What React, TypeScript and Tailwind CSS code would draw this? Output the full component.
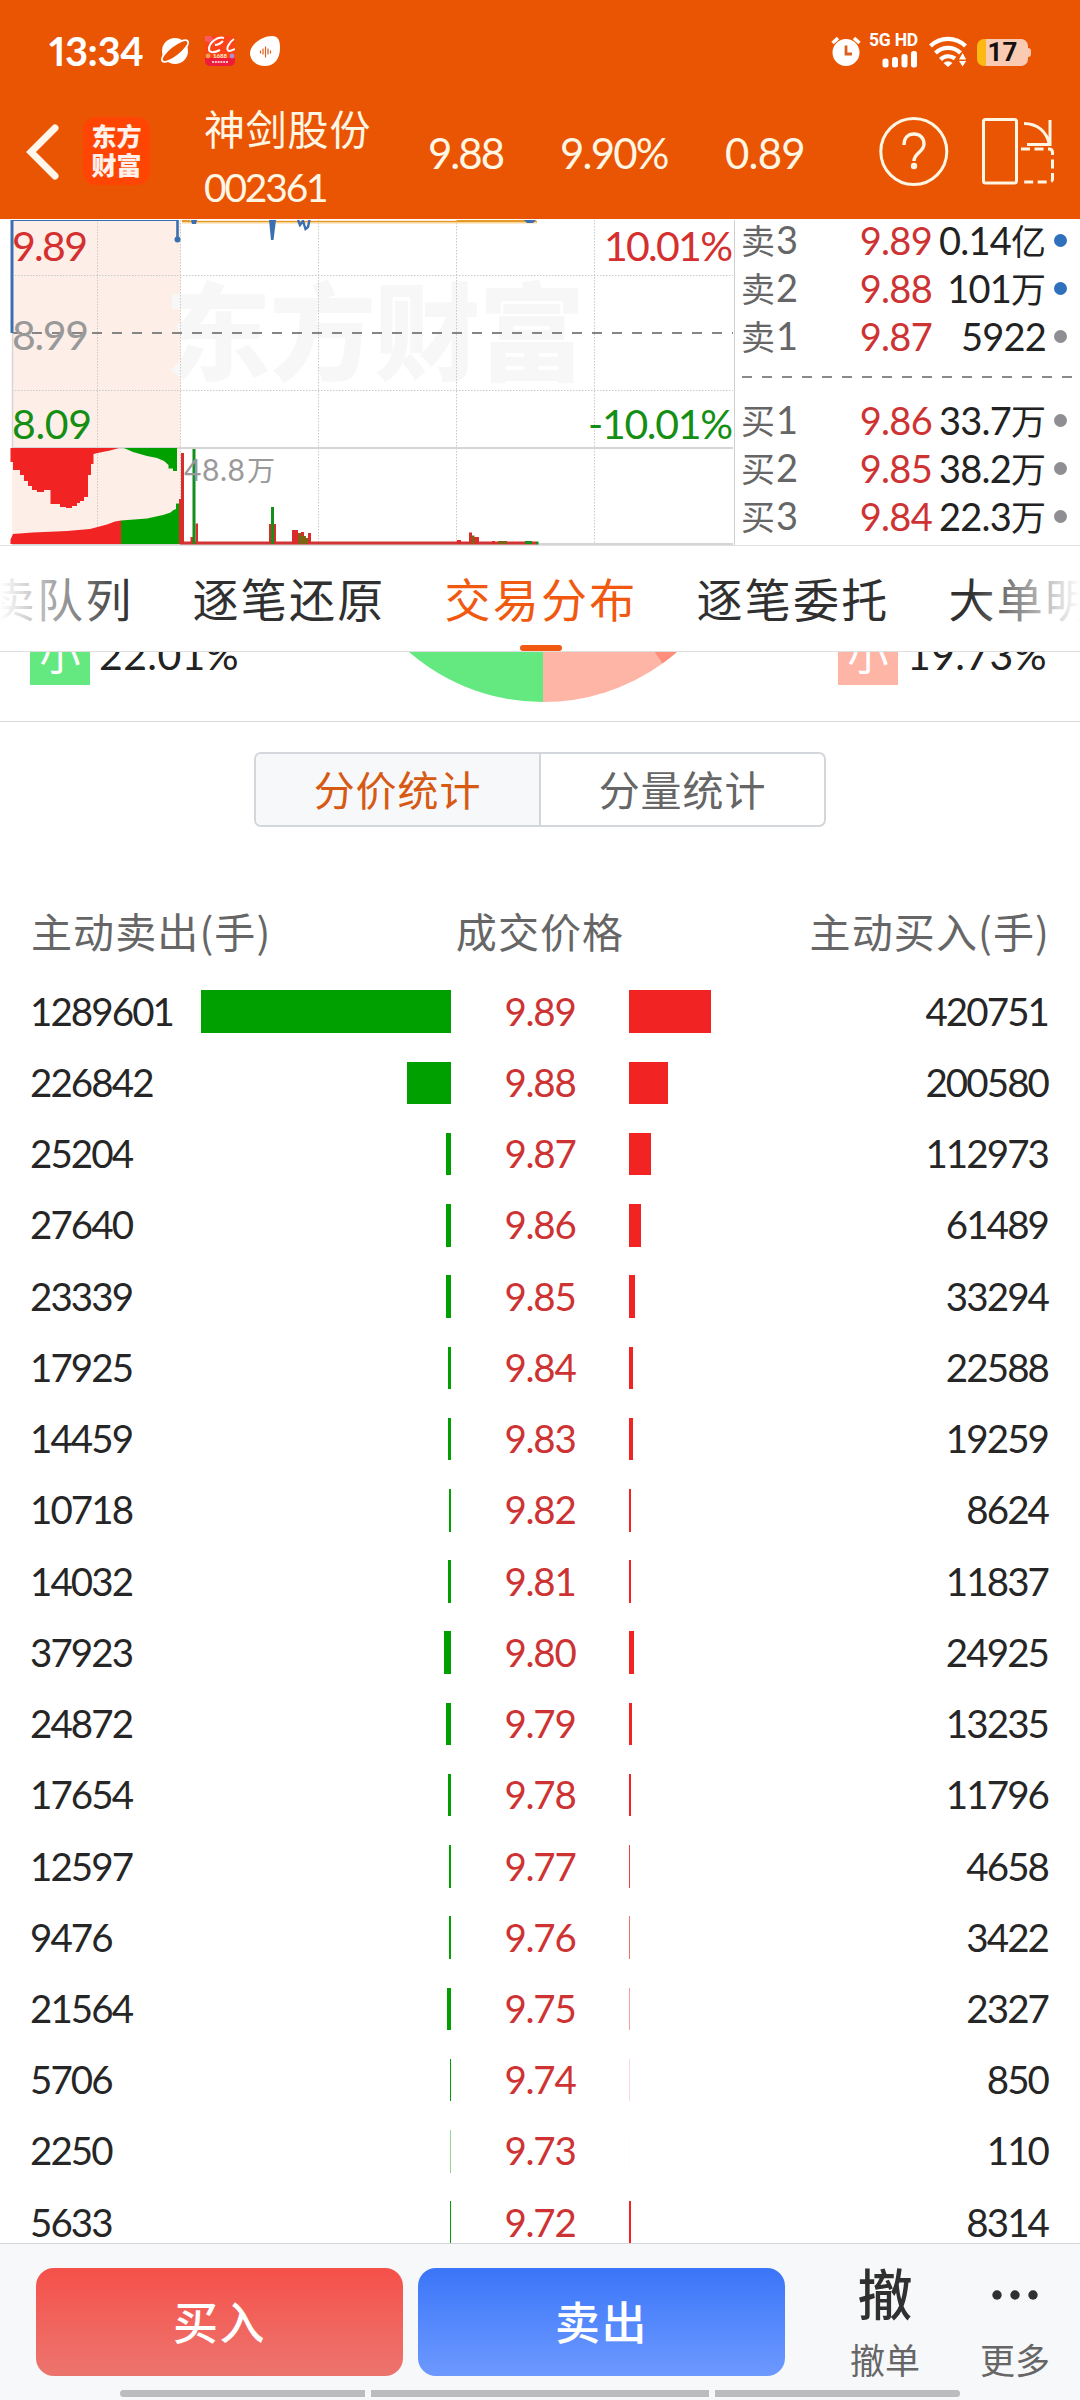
import { ReactNode } from 'react'

const rows = [
  { price: '9.89', sell: 1289601, buy: 420751 },
  { price: '9.88', sell: 226842, buy: 200580 },
  { price: '9.87', sell: 25204, buy: 112973 },
  { price: '9.86', sell: 27640, buy: 61489 },
  { price: '9.85', sell: 23339, buy: 33294 },
  { price: '9.84', sell: 17925, buy: 22588 },
  { price: '9.83', sell: 14459, buy: 19259 },
  { price: '9.82', sell: 10718, buy: 8624 },
  { price: '9.81', sell: 14032, buy: 11837 },
  { price: '9.80', sell: 37923, buy: 24925 },
  { price: '9.79', sell: 24872, buy: 13235 },
  { price: '9.78', sell: 17654, buy: 11796 },
  { price: '9.77', sell: 12597, buy: 4658 },
  { price: '9.76', sell: 9476, buy: 3422 },
  { price: '9.75', sell: 21564, buy: 2327 },
  { price: '9.74', sell: 5706, buy: 850 },
  { price: '9.73', sell: 2250, buy: 110 },
  { price: '9.72', sell: 5633, buy: 8314 },
]

const maxVolume = 1289601

// bars thinner than a pixel fade out instead of disappearing
function barStyle(v: number) {
  const w = (v / maxVolume) * 250
  return { width: `${Math.max(1, w)}px`, opacity: Math.min(1, w) }
}

const asks = [
  { side: '卖', level: '3', price: '9.89', volume: '0.14', unit: '亿', big: true },
  { side: '卖', level: '2', price: '9.88', volume: '101', unit: '万', big: true },
  { side: '卖', level: '1', price: '9.87', volume: '5922', unit: '', big: false },
]

const bids = [
  { side: '买', level: '1', price: '9.86', volume: '33.7', unit: '万', big: false },
  { side: '买', level: '2', price: '9.85', volume: '38.2', unit: '万', big: false },
  { side: '买', level: '3', price: '9.84', volume: '22.3', unit: '万', big: false },
]

const tabs = ['买卖队列', '逐笔还原', '交易分布', '逐笔委托', '大单明细']

function StatusBar() {
  return (
    <div className="flex h-[102px] items-start pl-[49px] text-white">
      <span className="mt-[27px] w-[111px] text-[40px] font-bold leading-[48px] tracking-[-0.5px] proportional-nums">13:34</span>
      <svg className="mt-[36px]" width="30" height="30" viewBox="0 0 30 30">
        <circle cx="15" cy="15" r="13" fill="#fff" />
        <ellipse cx="15" cy="15" rx="17" ry="6.6" transform="rotate(-38 15 15)" fill="#fff" />
        <ellipse cx="15" cy="15" rx="15.2" ry="4.3" transform="rotate(-38 15 15)" fill="#EA5504" />
      </svg>
      <svg className="ml-[15px] mt-[36px]" width="30" height="30" viewBox="0 0 30 30">
        <rect width="30" height="30" rx="5" fill="#FA4316" />
        <path d="M0 5V0h6l5 8z" fill="#FB5A63" />
        <path d="M0 22h30v3a5 5 0 0 1-5 5H5a5 5 0 0 1-5-5z" fill="#EE1B3A" />
        <path d="M19 2C12 0 4 7 4 13c0 4 5 4 11 1M10 9c4 0 6-2 8-4M29 3c-5 3-9 11-5 12 2 0 4-1 6-2" fill="none" stroke="#fff" strokeWidth="2" />
        <circle cx="3" cy="20" r="2.4" fill="#F0A04B" />
        <circle cx="27" cy="20" r="2.4" fill="#B58BD0" />
        <text x="15" y="22" fontSize="6" fontWeight="900" textAnchor="middle" fill="#FFE9C0">1688</text>
        <path d="M7 26h16" stroke="#FFC1C8" strokeWidth="2" strokeDasharray="2 .8" />
      </svg>
      <svg className="ml-[15px] mt-[36px]" width="30" height="30" viewBox="0 0 30 30">
        <path d="M22 0c6 0 8 4 8 12 0 11-6 18-15 18S0 24 0 17C0 8 13 0 22 0z" fill="#fff" />
        <path d="M10.500 14.500v3M13 12.500v6M15.500 10.500v11M18 12.500v6M20.500 14.500v3" stroke="#D9601F" strokeWidth="1.200" />
      </svg>

      <svg className="ml-[551px] mt-[36px]" width="30" height="30" viewBox="0 0 30 30">
        <circle cx="15" cy="16.500" r="13.500" fill="#fff" />
        <path d="M1.500 7l5.500-5M28.500 7L23 2" stroke="#fff" strokeWidth="3.500" />
        <path d="M15 9.500v8.500h6" fill="none" stroke="#D9601F" strokeWidth="2.800" />
      </svg>
      <div className="ml-[8px] mt-[32px] flex w-[49px] flex-col items-end">
        <span className="whitespace-nowrap font-['Roboto'] text-[17.500px] font-bold leading-[17px] tracking-[-0.2px]">5G HD</span>
        <svg className="mt-[2px]" width="36" height="17" viewBox="0 0 36 17">
          <rect x="0.500" y="7.500" width="6" height="9" rx="2.500" fill="#fff" />
          <rect x="10" y="6" width="6" height="10.500" rx="2.500" fill="#fff" />
          <rect x="19.500" y="3" width="6" height="13.500" rx="2.500" fill="#fff" />
          <rect x="29" y="0" width="6" height="16.500" rx="2.500" fill="#fff" />
        </svg>
      </div>
      <svg className="ml-[11px] mt-[36px]" width="38" height="31" viewBox="0 0 38 31">
        <g fill="none" stroke="#fff" strokeWidth="4.200">
          <path d="M1.500 10a25 25 0 0 1 35 0" />
          <path d="M6.500 17a18 18 0 0 1 25 0" />
          <path d="M11.500 23.500a11 11 0 0 1 14.500-1" />
        </g>
        <path d="M14.500 27q4.500-3.500 9 0L19 31z" fill="#fff" />
        <path d="M30 23.500l3.600-6.500 3.600 6.500zM30 25h7.200l-3.600 5.500z" fill="#fff" />
      </svg>
      <div className="ml-[10px] mt-[39px] flex items-center">
        <div className="flex h-[27px] w-[51px] items-center justify-center rounded-[7px] bg-[linear-gradient(90deg,#FCB813_9px,#F9CBB3_9px)] font-['Roboto'] text-[26px] font-bold leading-[27px] text-[#17110E]">
          17
        </div>
        <div className="h-[9px] w-[3px] rounded-r-[3px] bg-[#F9CBB3]" />
      </div>
    </div>
  )
}

function Header() {
  return (
    <header className="h-[219px] bg-[#EA5504] text-[#FFF6E4]">
      <StatusBar />
      <div className="flex h-[117px] items-start">
        <svg className="ml-[25px] mt-[20px]" width="36" height="60" viewBox="0 0 36 60" fill="none">
          <path d="M30 6L6 30l24 24" stroke="#FFF6EC" strokeWidth="7" strokeLinecap="round" strokeLinejoin="miter" />
        </svg>
        <div className="ml-[22px] mt-[15px] flex h-[68px] w-[67px] flex-col items-center justify-center rounded-[13px] bg-[#FF4503] text-[25px] font-black leading-[29px] text-[#FFF1EC]">
          <span>东方</span>
          <span>财富</span>
        </div>
        <div className="ml-[54px] flex w-[224px] flex-col">
          <span className="mt-[1px] text-[41px] leading-[54px] tracking-[0.8px]">神剑股份</span>
          <span className="mt-[7px] text-[39px] leading-[46px] tracking-[-2.200px]">002361</span>
        </div>
        <span className="mt-[26px] w-[132px] text-[42px] leading-[50px] tracking-[-2px]">9.88</span>
        <span className="mt-[26px] w-[165px] text-[42px] leading-[50px] tracking-[-1.800px]">9.90%</span>
        <span className="mt-[26px] w-[154px] text-[42px] leading-[50px] tracking-[-0.8px]">0.89</span>
        <svg className="mt-[15px] shrink-0" width="70" height="70" viewBox="0 0 70 70" fill="none" stroke="#FFF6E4" strokeWidth="3">
          <circle cx="34.800" cy="34.500" r="33" />
          <path d="M25 28c0-7 4-11 10-11s10 4 10 10c0 8-10 9-10 17" strokeWidth="3.400" />
          <circle cx="35" cy="49" r="3.200" fill="#FFF6E4" stroke="none" />
        </svg>
        <svg className="ml-[33px] mt-[15px] shrink-0" width="74" height="70" viewBox="0 0 74 70" fill="none" stroke="#FFF6E4" strokeWidth="3">
          <rect x="1.500" y="2.500" width="33" height="63.500" rx="2" />
          <path d="M42 6.500c14 0 23 9 25 20M68 3v24.500H45" />
          <path d="M39 32h28q3.500 0 3.500 3.500V62q0 3-3.500 3H39" strokeDasharray="9 4.500" />
        </svg>
      </div>
    </header>
  )
}

function MinuteChart() {
  return (
    <svg width="736" height="326" viewBox="0 220 736 326" className="shrink-0">
      <rect x="12" y="220" width="168.500" height="324" fill="#FDEEE7" />
      <text x="165" y="372" fontSize="106" fontWeight="900" fill="#F7F7F7" textLength="420">东方财富</text>
      <g stroke="#C9C9C9" strokeWidth="1" strokeDasharray="1.500 1.500">
        <path d="M12 275.500H733M12 390.500H733" />
        <path d="M97.500 220V544M180.500 220V544M318.500 220V544M456.500 220V544M594.500 220V544" />
      </g>
      <path d="M12 333H733" stroke="#858585" strokeWidth="2" strokeDasharray="10 10" />
      <path d="M12.500 333V448" stroke="#D5D5D5" strokeWidth="1.500" />
      <path d="M12 448H733M12 544H733" stroke="#D5D5D5" strokeWidth="2" />
      <path d="M734.500 220V545" stroke="#CFCFCF" />

      {/* price & average lines */}
      <path d="M182 222H537" stroke="#F8D698" strokeWidth="3" />
      <path d="M182 221.500H537" stroke="#E79A2C" strokeWidth="1" />
      <path d="M182 220.500H190M457 220.500H530" stroke="#E79A2C" strokeWidth="1" />
      <path d="M12 333V220" stroke="#3A70B2" strokeWidth="3" />
      <path d="M12 220.500H178" stroke="#3A70B2" strokeWidth="1.200" />
      <path d="M177.500 220V239" stroke="#3A70B2" strokeWidth="2.600" />
      <circle cx="177.500" cy="239.500" r="3" fill="#3A70B2" />
      <path d="M191 220h6l-1 4h-4zM269 220h7l-2.500 20h-2.500zM524 220h12l-3 3h-6z" fill="#3A70B2" />
      <path d="M298 220l2 5 3-4 2.500 8 2.500-2 1.500-7" fill="none" stroke="#3A70B2" strokeWidth="2.400" />

      {/* call auction */}
      <path
        d="M10.500 448V462H13V470H20V475H24V481H28V486H32V490H37V492H44V490H50.500V504H60V507H66V508H72V506H77V503H80V501H84V497H88V475H91V464H93.500V454L100 452.500L110 450.500L119 448Z"
        fill="#F22323"
      />
      <path d="M124 448L133 452L147 456L157 458L164 461L168.500 465V468.500H173V471H177V448Z" fill="#00A000" />
      <path d="M10.500 544V539.500L13 534L33 532.500L67 531L90 529L107 524.500L115 521.500L121 520.500V544Z" fill="#F22323" />
      <path d="M121 520.500L147 518.500L163 515L170.500 512.500L173.500 510L176 509V503.500H179V544H121Z" fill="#00A000" />

      {/* volume */}
      <path d="M180 543H536" stroke="#D23434" strokeWidth="3" />
      <path d="M179 499h2v-46h3V544h-5zM190.500 537h2.500v7h-2.500zM195.500 523.500h2.500V544h-2.500zM269 524h7V544h-7zM292 530h6V544h-6zM308 533h3V544h-3zM301 532h3v4h2v8h-5zM469 532.500h3V544h-3zM474 537h5v7h-5zM457 540h4v4h-4zM492 541h3v3h-3z" fill="#DB2B2B" />
      <path d="M192.500 449h3V544h-3zM271 507h3V544h-3zM525 541h7v3h-7zM536 541.500h2.500v3H536z" fill="#12901A" />
      <path d="M298 533h3V544h-3zM301 536h5V544h-5zM304 538h4V544h-4zM471.500 535.500h3V544h-3zM498 541h9v3h-9z" fill="#7C6414" />

      <g fontSize="41">
        <text x="12" y="261" fill="#D43030" textLength="76">9.89</text>
        <text x="12" y="350" fill="#999" textLength="77">8.99</text>
        <text x="12" y="439" fill="#148F14" textLength="80">8.09</text>
        <text x="604" y="261" fill="#D43030" textLength="129">10.01%</text>
        <text x="588" y="439" fill="#148F14" textLength="145">-10.01%</text>
        <text x="184" y="481" fill="#999" fontSize="30">
          <tspan textLength="61">48.8</tspan>
          <tspan x="247" fontSize="28">万</tspan>
        </text>
      </g>
    </svg>
  )
}

function DepthRow({ item }: { item: (typeof asks)[number] }) {
  return (
    <div className="flex h-12 items-center text-[38px] leading-[48px] tracking-[-0.8px]">
      <span className="flex w-[91px] items-baseline text-[#666]">
        <span className="text-[34px] tracking-normal">{item.side}</span>
        <span className="ml-[1px]">{item.level}</span>
      </span>
      <span className="w-[100px] text-right tracking-[-0.7px] text-[#CE3333]">{item.price}</span>
      <span className="flex w-[114px] items-baseline justify-end whitespace-nowrap text-[#222]">
        <span>{item.volume}</span>
        {item.unit && <span className="text-[35px] tracking-normal">{item.unit}</span>}
      </span>
      <span className={`ml-[8px] size-[13px] rounded-full ${item.big ? 'bg-[#2F70BC]' : 'bg-[#8F8E93]'}`} />
    </div>
  )
}

function Quote() {
  return (
    <section className="flex h-[327px] border-b border-[#E0E0E0] pt-[1px]">
      <MinuteChart />
      <div className="flex flex-col pl-[5px]">
        <div className="-mt-[4px]">
          {asks.map(a => <DepthRow key={a.level} item={a} />)}
        </div>
        <svg className="ml-[1px] mt-[16px]" width="332" height="2">
          <path d="M0 1H332" stroke="#8A8A8A" strokeWidth="2" strokeDasharray="10 10" />
        </svg>
        <div className="mt-[18px]">
          {bids.map(b => <DepthRow key={b.level} item={b} />)}
        </div>
      </div>
    </section>
  )
}

function Tabs() {
  return (
    <nav className="relative h-[106px] overflow-hidden border-b border-[#DEDEDE]">
      <div className="-ml-[59px] flex h-full gap-[60px]">
        {tabs.map(tab => (
          <div key={tab} className="flex w-[192px] shrink-0 flex-col items-center">
            <span
              className={`mt-[18px] whitespace-nowrap text-[46px] leading-[72px] tracking-[2.200px] ${
                tab === '交易分布' ? 'text-[#F0590F]' : 'text-[#303030]'
              }`}>
              {tab}
            </span>
            {tab === '交易分布' && <span className="mt-[9px] h-[6px] w-[42px] rounded-full bg-[#F0590F]" />}
          </div>
        ))}
      </div>
      <div className="absolute inset-y-0 left-0 w-[128px] bg-gradient-to-r from-white to-white/0" />
      <div className="absolute inset-y-0 right-0 w-[110px] bg-gradient-to-l from-white to-white/0" />
    </nav>
  )
}

function Legend({ color, children }: { color: string; children: ReactNode }) {
  return (
    <div className="-mt-[27px] flex h-[59px] items-center">
      <span className={`flex size-[60px] items-center justify-center text-[41px] text-white ${color}`}>小</span>
      <span className="ml-[9px] text-[41px] leading-[60px] tracking-[0.4px] text-[#222]">{children}</span>
    </div>
  )
}

function PieSection() {
  return (
    <section className="flex h-[70px] items-start overflow-hidden border-b border-[#D8D8D8]">
      <div className="w-[338px] pl-[30px]">
        <Legend color="bg-[#63E97F]">22.01%</Legend>
      </div>
      <svg width="410" height="52" viewBox="338 652 410 52">
        <path d="M543 497.400V702A204.600 204.600 0 0 1 338.400 497.400Z" fill="#63E97F" />
        <path d="M543 497.400V702A204.600 204.600 0 0 0 662.500 663.500Z" fill="#FEB5A6" />
        <path d="M543 497.400L662.500 663.500A204.600 204.600 0 0 0 747.600 497.400Z" fill="#FE8D7C" />
      </svg>
      <div className="ml-[90px]">
        <Legend color="bg-[#FEB5A6]">19.73%</Legend>
      </div>
    </section>
  )
}

function Distribution() {
  return (
    <main className="h-[1521px] overflow-hidden">
      <div className="mx-auto mt-[30px] flex h-[75px] w-[572px] overflow-hidden rounded-[7px] border-2 border-[#D3D6DA] text-[41px] leading-[60px] tracking-[0.9px]">
        <button className="flex-1 border-r-2 border-[#D3D6DA] bg-[#F7F8FA] pt-[3px] text-[#D65A14]">分价统计</button>
        <button className="flex-1 pt-[3px] text-[#666]">分量统计</button>
      </div>

      <div className="mt-[74px] flex h-[60px] items-center text-[41px] tracking-[1.100px] text-[#666] [font-family:'Noto_Sans_CJK_SC',sans-serif]">
        <span className="w-[430px] pl-[31px]">主动卖出(手)</span>
        <span className="w-[220px] text-center">成交价格</span>
        <span className="w-[430px] pr-[30px] text-right">主动买入(手)</span>
      </div>

      <div className="mt-[15px]">
        {rows.map(row => (
          <div key={row.price} className="flex h-[71.235px] items-center text-[38.500px] tracking-[-1.900px]">
            <span className="w-[170px] pl-[30px] text-[#262626]">{row.sell}</span>
            <span className="flex w-[281px] justify-end">
              <span className="h-[42.500px] bg-[#00A000]" style={barStyle(row.sell)} />
            </span>
            <span className="w-[178px] text-center tracking-[-1.300px] text-[#CE3333]">{row.price}</span>
            <span className="flex w-[251px]">
              <span className="h-[42.500px] bg-[#F22323]" style={barStyle(row.buy)} />
            </span>
            <span className="w-[168px] text-right text-[#262626]">{row.buy}</span>
          </div>
        ))}
      </div>
    </main>
  )
}

function TradeBar() {
  return (
    <footer className="h-[157px] border-t border-[#D5D6D8] bg-[#F7F8FA]">
      <div className="flex h-[146px] pt-[24px]">
        <button className="ml-[36px] h-[108px] w-[367px] rounded-[18px] bg-gradient-to-b from-[#F5504A] to-[#EC746E] pt-[3px] text-[45px] font-medium tracking-[1.500px] text-white">
          买入
        </button>
        <button className="ml-[15px] h-[108px] w-[367px] rounded-[18px] bg-gradient-to-b from-[#3A75F8] to-[#6D99FF] pt-[3px] text-[45px] font-medium tracking-[1.500px] text-white">
          卖出
        </button>
        <div className="ml-[50px] flex w-[100px] flex-col items-center text-[#666]">
          <span className="-mt-[4px] text-[55px] font-medium leading-[60px] text-[#303030]">撤</span>
          <span className="mt-[14px] text-[35px] leading-[44px]">撤单</span>
        </div>
        <div className="ml-[30px] flex w-[100px] flex-col items-center text-[#666]">
          <svg className="mt-[-4px]" width="60" height="60" viewBox="0 0 60 60" fill="#303030">
            <circle cx="12" cy="31" r="4.700" />
            <circle cx="30" cy="31" r="4.700" />
            <circle cx="48" cy="31" r="4.700" />
          </svg>
          <span className="mt-[14px] text-[35px] leading-[44px]">更多</span>
        </div>
      </div>
      <div className="flex justify-center gap-[6px]">
        <div className="h-[7px] w-[245px] rounded-l-full bg-[#BBBCBE]" />
        <div className="h-[7px] w-[338px] bg-[#BBBCBE]" />
        <div className="h-[7px] w-[245px] rounded-r-full bg-[#BBBCBE]" />
      </div>
    </footer>
  )
}

export default function App() {
  return (
    <div className="h-[2400px] w-[1080px] overflow-hidden bg-white tabular-nums [font-family:Lato,'Noto_Sans_CJK_SC',sans-serif]">
      <Header />
      <Quote />
      <Tabs />
      <PieSection />
      <Distribution />
      <TradeBar />
    </div>
  )
}
